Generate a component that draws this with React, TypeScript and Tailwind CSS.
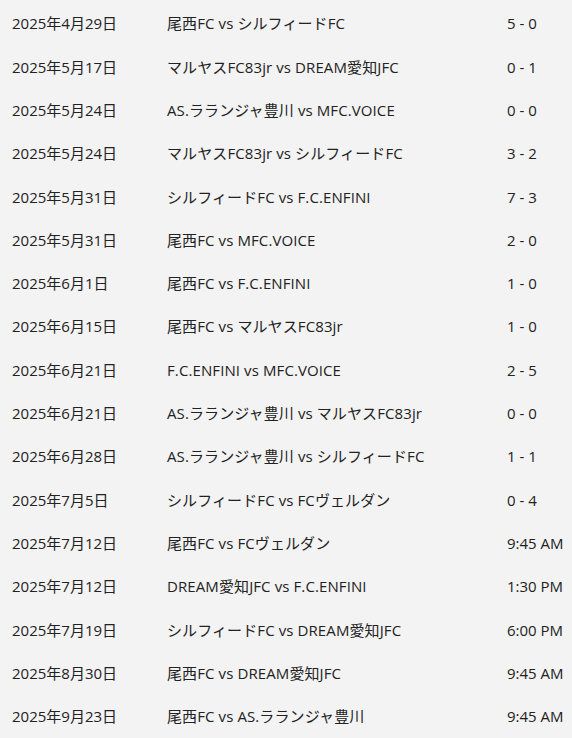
const matches = [
  { date: "2025年4月29日", match: "尾西FC vs シルフィードFC", result: "5 - 0" },
  { date: "2025年5月17日", match: "マルヤスFC83jr vs DREAM愛知JFC", result: "0 - 1" },
  { date: "2025年5月24日", match: "AS.ラランジャ豊川 vs MFC.VOICE", result: "0 - 0" },
  { date: "2025年5月24日", match: "マルヤスFC83jr vs シルフィードFC", result: "3 - 2" },
  { date: "2025年5月31日", match: "シルフィードFC vs F.C.ENFINI", result: "7 - 3" },
  { date: "2025年5月31日", match: "尾西FC vs MFC.VOICE", result: "2 - 0" },
  { date: "2025年6月1日", match: "尾西FC vs F.C.ENFINI", result: "1 - 0" },
  { date: "2025年6月15日", match: "尾西FC vs マルヤスFC83jr", result: "1 - 0" },
  { date: "2025年6月21日", match: "F.C.ENFINI vs MFC.VOICE", result: "2 - 5" },
  { date: "2025年6月21日", match: "AS.ラランジャ豊川 vs マルヤスFC83jr", result: "0 - 0" },
  { date: "2025年6月28日", match: "AS.ラランジャ豊川 vs シルフィードFC", result: "1 - 1" },
  { date: "2025年7月5日", match: "シルフィードFC vs FCヴェルダン", result: "0 - 4" },
  { date: "2025年7月12日", match: "尾西FC vs FCヴェルダン", result: "9:45 AM" },
  { date: "2025年7月12日", match: "DREAM愛知JFC vs F.C.ENFINI", result: "1:30 PM" },
  { date: "2025年7月19日", match: "シルフィードFC vs DREAM愛知JFC", result: "6:00 PM" },
  { date: "2025年8月30日", match: "尾西FC vs DREAM愛知JFC", result: "9:45 AM" },
  { date: "2025年9月23日", match: "尾西FC vs AS.ラランジャ豊川", result: "9:45 AM" },
];

function App() {
  return (
    <div
      className="min-h-screen bg-[#f3f3f3] pt-[2px] text-[15px] text-[#222]"
      style={{ fontFamily: '"Open Sans", "Noto Sans CJK JP", sans-serif' }}
    >
      {matches.map((m, i) => (
        <div
          key={i}
          className="grid h-[43.3px] grid-cols-[155px_340px_1fr] items-center pl-3 whitespace-nowrap"
        >
          <div>{m.date}</div>
          <div className="tracking-[0.1px]">{m.match}</div>
          <div>{m.result}</div>
        </div>
      ))}
    </div>
  );
}

export default App;
